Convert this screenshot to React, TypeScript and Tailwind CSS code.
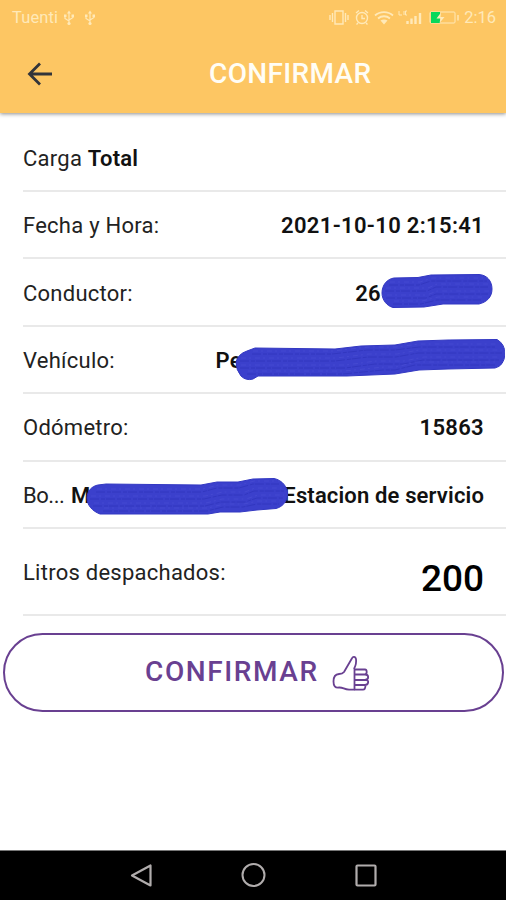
import type { ReactNode } from 'react'

function UsbIcon() {
  return (
    <svg className="w-3 h-4" viewBox="0 0 12 16" fill="none" stroke="currentColor" strokeWidth={1.2} aria-hidden="true">
      <path d="M6 2v11M6 11L2 8.500V6M6 10l4-2.500V6" />
      <path d="M6 .5L8 3.500H4z" fill="currentColor" stroke="none" />
      <circle cx="6" cy="13.500" r="1.600" fill="currentColor" stroke="none" />
      <path d="M1 4.500h2.500V7H1zM8.500 4.500H11V7H8.500z" fill="currentColor" stroke="none" />
    </svg>
  )
}

function StatusBar() {
  return (
    <div className="flex h-9 items-center justify-between pl-3 pr-[10px] text-[#ffe9b8]">
      <div className="flex items-center">
        <span className="w-[51px] text-[16.500px] leading-4 tracking-[0.1px]">Tuenti</span>
        <UsbIcon />
        <span className="w-[9px]" />
        <UsbIcon />
      </div>
      <div className="flex items-center">
        <svg className="h-5 w-[132px]" viewBox="0 0 132 20" fill="none" stroke="currentColor" strokeWidth={1.400} aria-hidden="true">
          {/* vibrate */}
          <path d="M6 3h8v13H6zM3.500 5v9M16.500 5v9M1 7v5M19 7v5" />
          {/* alarm */}
          <circle cx="33" cy="10" r="5.500" />
          <path d="M33 7v3.500h3M27 5l3-2.500M39 5l-3-2.500M29 15l-1.500 1.500M37 15l1.500 1.500" />
          {/* wifi */}
          <path d="M46 7.500c5-4.500 13-4.500 18 0M49 10.500c3.500-3 8.500-3 12 0" strokeWidth={1.800} />
          <path d="M51.500 12.500c2-1.500 5-1.500 7 0L55 16.500z" fill="currentColor" stroke="none" />
          {/* signal */}
          <path d="M70 3v4h3M75 3v4M78 3h-1.500v4H78" strokeWidth={1} />
          <path d="M78.500 13v3M82.500 10.500V16M86.500 8v8M91 5v11" strokeWidth={2.400} />
          {/* battery */}
          <rect x="101" y="4" width="25" height="11" rx="1" strokeWidth={1} />
          <path d="M129 7v5.500" />
          <path d="M102 4h9v11h-9z" fill="#09d85b" stroke="none" />
          <path d="M112 4.500l-4.500 6h4l-1 4.500 5-6h-4z" fill="currentColor" stroke="none" />
        </svg>
        <span className="ml-[3px] text-[16.500px] leading-4">2:16</span>
      </div>
    </div>
  )
}

function Header() {
  return (
    <header className="relative z-10 h-[113px] bg-[#fdc663] shadow-[0_1px_4px_rgba(0,0,0,0.45)]">
      <StatusBar />
      <div className="flex h-[76px] items-center">
        <svg className="ml-[27px] h-6 w-[25px]" viewBox="0 0 25 24" fill="none" stroke="#32343a" strokeWidth={2.800} aria-hidden="true">
          <path d="M25 12H2.500M13 1.500L2.500 12 13 22.500" />
        </svg>
        <h1 className="ml-[157px] text-[28px] font-medium tracking-[0.350px] text-[#fffdf5]">CONFIRMAR</h1>
      </div>
    </header>
  )
}

type ScribbleProps = { className: string; viewBox: string; shape: string; grain: string }

function Scribble({ className, viewBox, shape, grain }: ScribbleProps) {
  return (
    <svg className={`absolute ${className}`} viewBox={viewBox} fill="none" aria-hidden="true">
      <path d={shape} fill="#3b40cc" stroke="#3338c2" strokeWidth={1} strokeLinejoin="round" />
      <path d={grain} stroke="#3035bd" strokeWidth={0.800} strokeDasharray="9 2 4 1" />
      <path d={grain} stroke="#494ed3" strokeWidth={0.700} strokeDasharray="5 3 2 4" transform="translate(1 -3)" />
    </svg>
  )
}

type RowProps = { label: string; className?: string; labelClass?: string; children?: ReactNode }

function Row({ label, className = 'h-[67.400px]', labelClass = 'tracking-[0.250px]', children }: RowProps) {
  return (
    <div className={`relative ml-[23px] flex items-center justify-between border-b-2 border-[#e9e9e9] pr-[22px] pt-[2px] ${className}`}>
      <span className={`text-[22px] text-[#222] ${labelClass}`}>{label}</span>
      {children}
    </div>
  )
}

function Value({ children, tracking = 'tracking-[0.330px]' }: { children: ReactNode; tracking?: string }) {
  return <span className={`text-[22px] font-semibold text-[#111] ${tracking}`}>{children}</span>
}

function ThumbIcon() {
  return (
    <svg className="h-9 w-[38px]" viewBox="0 0 38 36" fill="none" stroke="currentColor" strokeWidth={1.800} strokeLinejoin="round" aria-hidden="true">
      <path d="M22 14c2-4 2.500-7 2-10-.5-2.500-3-2.800-4-.8L12 17c-1.500 2-3 2-5 2-4 .2-5.500 3-5.500 7.500C1.500 31 3 33 7 32.500c4-.3 5 2 10 2.200h6" />
      <path d="M22.500 14.500h10.500c2 0 2.500 4.500 0 5h-10M33 19.500c4 0 4.500 5 0 5.500H22.500M34 25c3.500 0 2.500 5-1 5H22.500M33.500 30c0 3-1 4.700-2.500 4.700h-8.500M22.500 13.500v21" />
    </svg>
  )
}

function NavBar() {
  return (
    <nav className="flex h-[50px] items-center justify-between border-t border-[#777] bg-black pl-[129px] pr-[128px] text-[#b1adad]">
      <svg className="h-6 w-6" viewBox="0 0 24 24" fill="none" stroke="currentColor" strokeWidth={2.200} strokeLinejoin="round" aria-hidden="true">
        <path d="M21.500 1.500v20L3 11.500z" />
      </svg>
      <svg className="h-[25px] w-[25px]" viewBox="0 0 25 25" fill="none" stroke="currentColor" strokeWidth={2} aria-hidden="true">
        <circle cx="12.500" cy="12" r="11" />
      </svg>
      <svg className="h-6 w-6" viewBox="0 0 24 24" fill="none" stroke="currentColor" strokeWidth={2.200} aria-hidden="true">
        <rect x="2.500" y="1.500" width="19" height="20" rx="1" />
      </svg>
    </nav>
  )
}

export default function App() {
  return (
    <div className="flex h-[900px] w-full flex-col overflow-hidden bg-white font-['Roboto',sans-serif]">
      <Header />

      <main className="flex-1">
        <div className="ml-[23px] flex h-[79px] items-center border-b-2 border-[#e9e9e9] pt-[13px] text-[22px] tracking-[0.250px] text-[#222]">
          Carga&nbsp;<span className="font-semibold text-[#111]">Total</span>
        </div>

        <Row label="Fecha y Hora:">
          <Value>2021-10-10 2:15:41</Value>
        </Row>

        <Row label="Conductor:">
          <span className="mr-[103px]">
            <Value>26</Value>
          </span>
          <Scribble
            className="left-[358px] top-[15px] h-[36px] w-[114px]"
            viewBox="0 0 114 36"
            shape="M13 4L37 3.500 50 1 98 0.500C106 1 111 7 111 15C111 23 106 28 98 30L62 30 43 33 12 33.500C6 32 1 26 1 19C1 11 6 5 13 4z"
            grain="M8 11h30l12-4h56M4 17h42l9-4h52M5 24h40l10-4h52M12 30h28l16-4h44"
          />
        </Row>

        <Row label="Vehículo:">
          <span className="mr-[242px]">
            <Value>Pe</Value>
          </span>
          <Scribble
            className="left-[212px] top-[12px] h-[43px] w-[270px]"
            viewBox="0 0 270 43"
            shape="M12 12L20 9 100 10 126 7 160 6 183 2 213 1 262 0.500Q270 5 270 15Q269 27 260 29L213 30 184 31 160 35 112 37 23 37 18 40Q11 42 6 37Q1 31 1 23Q3 15 12 12z"
            grain="M17 15h80l35-4h28l24-3h76M5 22h95l33-4h28l22-4h84M5 29h105l30-4h28l20-4h76M12 35h96l40-4h12l20-5h80"
          />
        </Row>

        <Row label="Odómetro:">
          <Value>15863</Value>
        </Row>

        <Row label="Bo..." labelClass="w-[42px] tracking-[-0.450px]">
          <div className="flex flex-1 justify-between pl-[6px]">
            <Value>M</Value>
            <Value tracking="tracking-[0.150px]">Estacion de servicio</Value>
          </div>
          <Scribble
            className="left-[63px] top-[16px] h-[39px] w-[204px]"
            viewBox="0 0 204 39"
            shape="M12 7L20 6 115 7 131 4 152 4 167 1 188 0.500C196 2 202 9 201.500 17C201 24 196 29 190 30.500L171 32 154 34 134 34 122 36 14 36C6 33 1 27 1 20C1 13 6 8 12 7z"
            grain="M10 14h106l15-4h22l14-4h26M4 21h114l18-4h22l10-4h30M7 28h112l16-4h24l12-4h26M17 33h104l16-4h20l14-3h22"
          />
        </Row>

        <Row label="Litros despachados:" className="h-[87px]">
          <span className="pt-[12px] text-[37px] font-medium text-black">200</span>
        </Row>

        <button
          type="button"
          className="ml-[3px] mt-[17px] flex h-[79px] w-[501px] items-center rounded-full border-2 border-[#694091] pl-[140px] text-[#694091]"
        >
          <span className="text-[28px] font-medium tracking-[1.600px]">CONFIRMAR</span>
          <span className="ml-[13px] pt-[2px]">
            <ThumbIcon />
          </span>
        </button>
      </main>

      <NavBar />
    </div>
  )
}
